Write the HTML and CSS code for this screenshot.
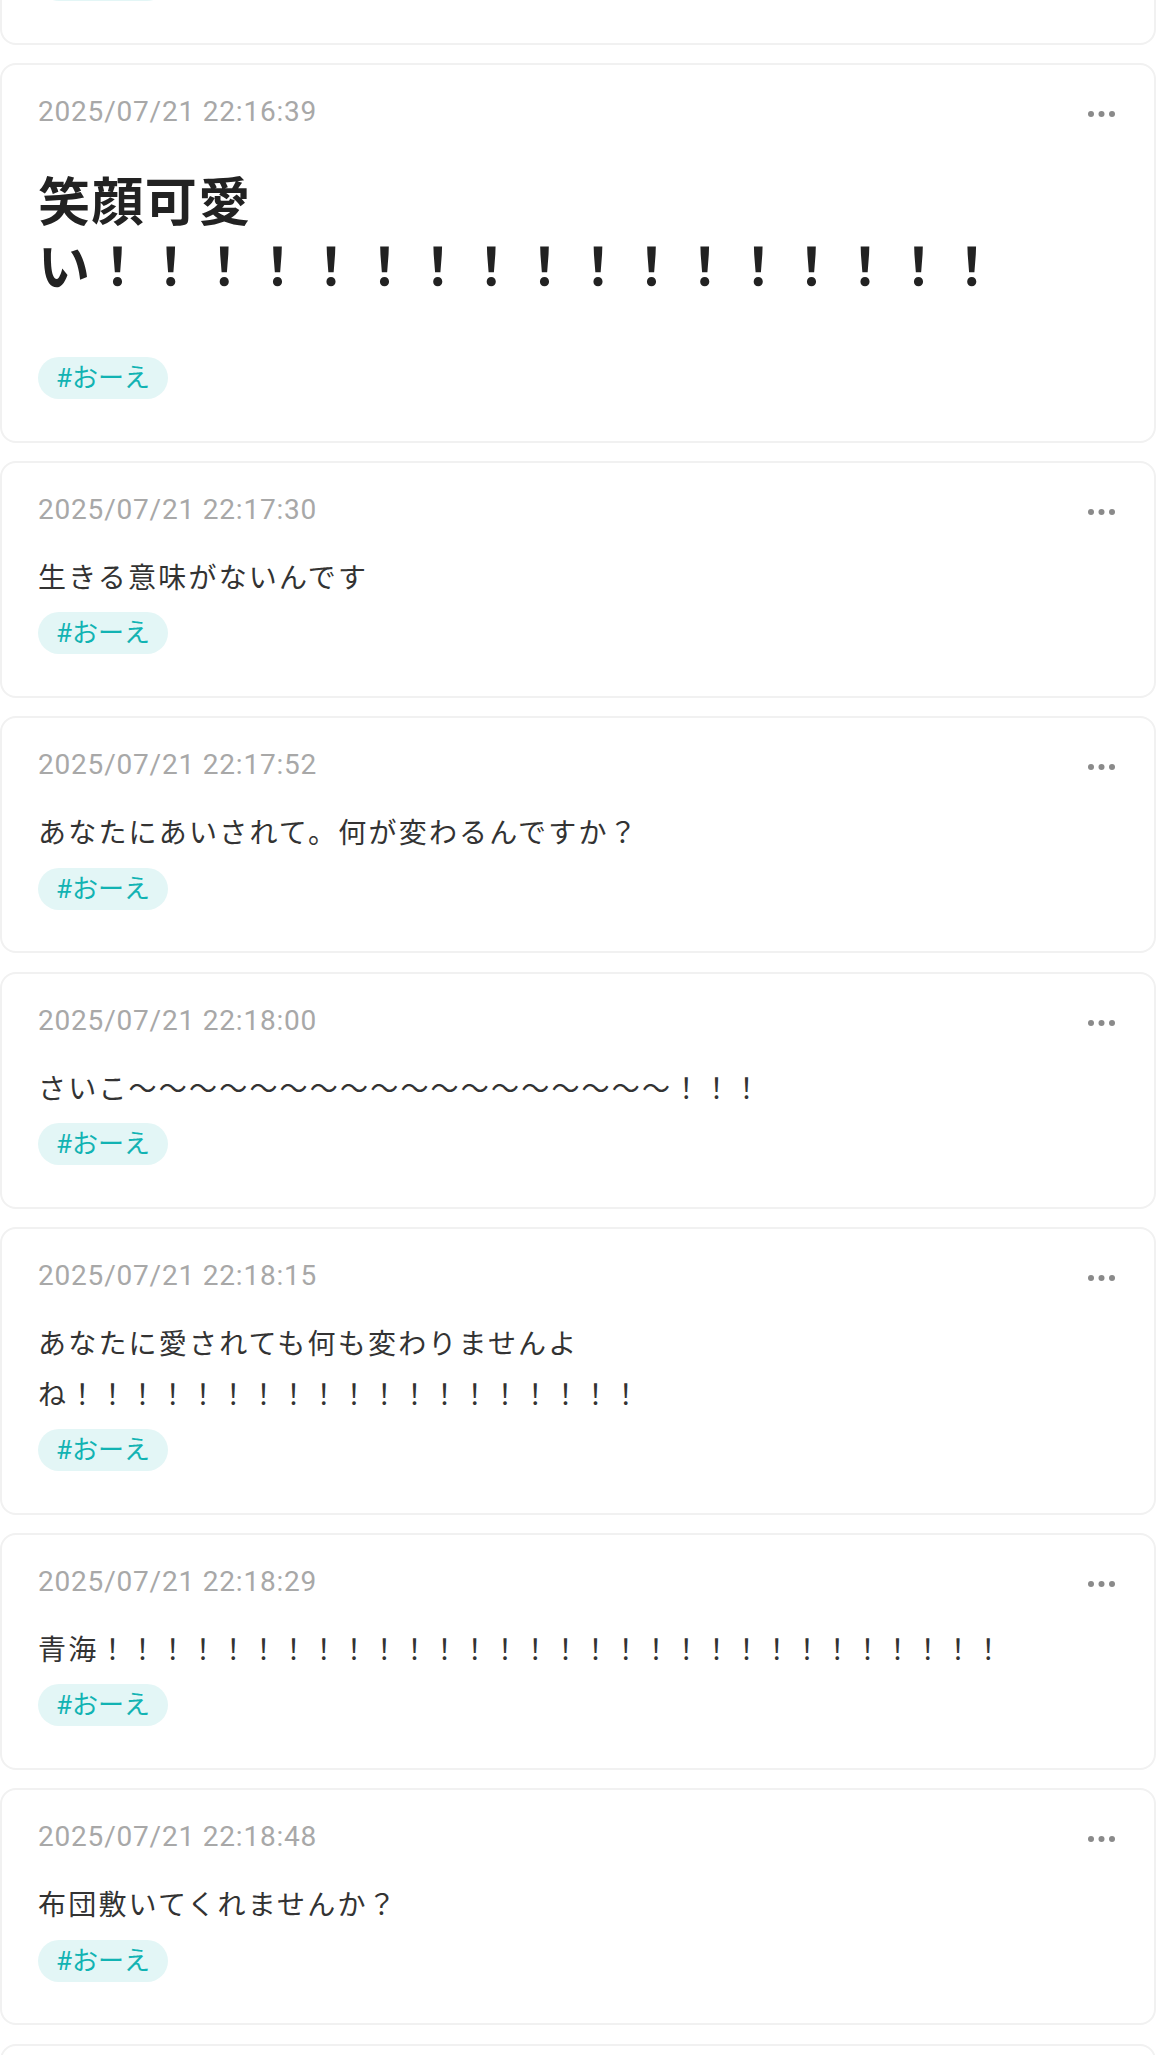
FILE: index.html
```html
<!DOCTYPE html>
<html lang="ja">
<head>
<meta charset="utf-8">
<title>投稿一覧</title>
<link rel="stylesheet" href="styles.css">
</head>
<body>
<main class="feed">
  <article class="post post-clipped">
    <div class="tags"><span class="tag">#おーえ</span></div>
  </article>

  <article class="post">
    <header class="post-head">
      <time class="date">2025/07/21 22:16:39</time>
      <button class="more" aria-label="メニュー"><svg width="30" height="8" viewBox="0 0 30 8"><circle cx="4" cy="4" r="3"/><circle cx="14.5" cy="4" r="3"/><circle cx="25" cy="4" r="3"/></svg></button>
    </header>
    <div class="body"><h1 class="heading">笑顔可愛い！！！！！！！！！！！！！！！！！</h1></div>
    <div class="tags"><span class="tag">#おーえ</span></div>
  </article>

  <article class="post">
    <header class="post-head">
      <time class="date">2025/07/21 22:17:30</time>
      <button class="more" aria-label="メニュー"><svg width="30" height="8" viewBox="0 0 30 8"><circle cx="4" cy="4" r="3"/><circle cx="14.5" cy="4" r="3"/><circle cx="25" cy="4" r="3"/></svg></button>
    </header>
    <div class="body"><p class="text">生きる意味がないんです</p></div>
    <div class="tags"><span class="tag">#おーえ</span></div>
  </article>

  <article class="post">
    <header class="post-head">
      <time class="date">2025/07/21 22:17:52</time>
      <button class="more" aria-label="メニュー"><svg width="30" height="8" viewBox="0 0 30 8"><circle cx="4" cy="4" r="3"/><circle cx="14.5" cy="4" r="3"/><circle cx="25" cy="4" r="3"/></svg></button>
    </header>
    <div class="body"><p class="text">あなたにあいされて。何が変わるんですか？</p></div>
    <div class="tags"><span class="tag">#おーえ</span></div>
  </article>

  <article class="post">
    <header class="post-head">
      <time class="date">2025/07/21 22:18:00</time>
      <button class="more" aria-label="メニュー"><svg width="30" height="8" viewBox="0 0 30 8"><circle cx="4" cy="4" r="3"/><circle cx="14.5" cy="4" r="3"/><circle cx="25" cy="4" r="3"/></svg></button>
    </header>
    <div class="body"><p class="text">さいこ〜〜〜〜〜〜〜〜〜〜〜〜〜〜〜〜〜〜！！！</p></div>
    <div class="tags"><span class="tag">#おーえ</span></div>
  </article>

  <article class="post">
    <header class="post-head">
      <time class="date">2025/07/21 22:18:15</time>
      <button class="more" aria-label="メニュー"><svg width="30" height="8" viewBox="0 0 30 8"><circle cx="4" cy="4" r="3"/><circle cx="14.5" cy="4" r="3"/><circle cx="25" cy="4" r="3"/></svg></button>
    </header>
    <div class="body"><p class="text">あなたに愛されても何も変わりませんよね！！！！！！！！！！！！！！！！！！！</p></div>
    <div class="tags"><span class="tag">#おーえ</span></div>
  </article>

  <article class="post">
    <header class="post-head">
      <time class="date">2025/07/21 22:18:29</time>
      <button class="more" aria-label="メニュー"><svg width="30" height="8" viewBox="0 0 30 8"><circle cx="4" cy="4" r="3"/><circle cx="14.5" cy="4" r="3"/><circle cx="25" cy="4" r="3"/></svg></button>
    </header>
    <div class="body"><p class="text">青海！！！！！！！！！！！！！！！！！！！！！！！！！！！！！！</p></div>
    <div class="tags"><span class="tag">#おーえ</span></div>
  </article>

  <article class="post">
    <header class="post-head">
      <time class="date">2025/07/21 22:18:48</time>
      <button class="more" aria-label="メニュー"><svg width="30" height="8" viewBox="0 0 30 8"><circle cx="4" cy="4" r="3"/><circle cx="14.5" cy="4" r="3"/><circle cx="25" cy="4" r="3"/></svg></button>
    </header>
    <div class="body"><p class="text">布団敷いてくれませんか？</p></div>
    <div class="tags"><span class="tag">#おーえ</span></div>
  </article>

  <article class="post post-next">
    <header class="post-head">
      <time class="date">2025/07/21 22:19:02</time>
    </header>
  </article>
</main>
</body>
</html>
```
FILE: styles.css
```css
html, body {
  margin: 0;
  padding: 0;
  background: #ffffff;
}

body {
  font-family: Roboto, "Noto Sans CJK JP", sans-serif;
  color: #333333;
  overflow: hidden;
}

.feed {
  display: flex;
  flex-direction: column;
  gap: 18.4px;
  margin-top: -67px;
}

.post {
  background: #ffffff;
  border: 2px solid #f1f1f1;
  border-radius: 16px;
  padding: 26px 36px 41.6px;
}

.post-head {
  display: flex;
  align-items: center;
  justify-content: space-between;
  height: 42px;
  margin-bottom: 23px;
}

.date {
  font-family: Roboto, "Noto Sans CJK JP", sans-serif;
  font-size: 28px;
  line-height: 42px;
  color: #a8a8a8;
  letter-spacing: 0.8px;
}

.more {
  border: 0;
  background: none;
  padding: 0;
  margin: 4px 1px 0 0;
  line-height: 0;
  fill: #8a8a8a;
}

.body {
  letter-spacing: 2.2px;
}

.text {
  margin: 0;
  font-size: 28px;
  line-height: 50.4px;
  color: #333333;
}

.heading {
  margin: 38px 0 56px;
  font-size: 52px;
  line-height: 65px;
  font-weight: 700;
  color: #222222;
  letter-spacing: 1.4px;
}

.tags {
  margin-top: 8px;
  display: flex;
  gap: 12px;
}

.tag {
  display: inline-block;
  height: 42px;
  line-height: 42px;
  padding: 0 18px;
  border-radius: 21px;
  background: #e3f6f6;
  color: #12b3b3;
  font-size: 26px;
}

.post-clipped {
  padding-top: 24px;
}

.post-clipped .tags {
  margin-top: 0;
}
```
